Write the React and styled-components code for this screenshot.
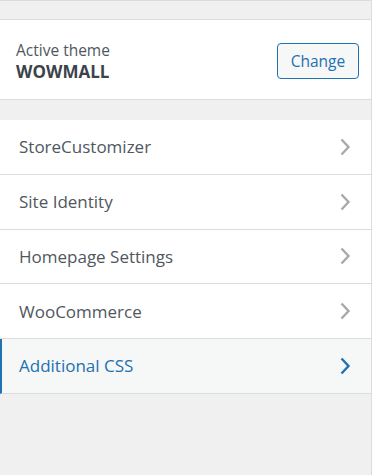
import React from "react";
import styled, { createGlobalStyle } from "styled-components";

const GlobalStyle = createGlobalStyle`
  html, body {
    margin: 0;
    padding: 0;
    background: #f0f0f1;
  }
  body {
    font-family: "Open Sans", "Noto Sans", "Liberation Sans", sans-serif;
    -webkit-font-smoothing: antialiased;
  }
`;

const Panel = styled.div`
  width: 372px;
  min-height: 475px;
  box-sizing: border-box;
  background: #f0f0f1;
  border-top: 1px solid #dcdcde;
  border-right: 1px solid #dcdcde;
  display: flex;
  flex-direction: column;
`;

const Gap = styled.div`
  height: ${(p) => p.size}px;
`;

const Info = styled.div`
  height: 81px;
  box-sizing: border-box;
  background: #fff;
  border-top: 1px solid #dcdcde;
  border-bottom: 1px solid #dcdcde;
  display: flex;
  align-items: center;
  justify-content: space-between;
  padding: 2px 12px 0 16px;
`;

const ThemeText = styled.div`
  display: flex;
  flex-direction: column;
  color: #50575e;
`;

const Label = styled.span`
  font-size: 15.5px;
  line-height: 22px;
  font-weight: 400;
`;

const ThemeName = styled.strong`
  font-size: 17px;
  line-height: 22px;
  font-weight: 700;
  color: #3c434a;
`;

const ChangeButton = styled.button`
  width: 82px;
  height: 36px;
  box-sizing: border-box;
  border: 1px solid #2271b1;
  border-radius: 4px;
  background: #f6f7f7;
  color: #2271b1;
  font-family: inherit;
  font-size: 15.5px;
  padding: 0;
  cursor: pointer;
`;

const Menu = styled.ul`
  list-style: none;
  margin: 0;
  padding: 0;
`;

const Item = styled.li`
  height: 54.75px;
  box-sizing: border-box;
  display: flex;
  align-items: center;
  justify-content: space-between;
  padding: 0 20px 0 ${(p) => (p.active ? 17 : 19)}px;
  background: ${(p) => (p.active ? "#f6f7f7" : "#fff")};
  border-bottom: 1px solid #dcdcde;
  border-left: ${(p) => (p.active ? "2px solid #2271b1" : "0")};
  color: ${(p) => (p.active ? "#2271b1" : "#50575e")};
  font-size: 17px;
  font-weight: 500;
  cursor: pointer;
`;

const Chevron = ({ color }) => (
  <svg width="12" height="18" viewBox="0 0 12 18" aria-hidden="true">
    <polyline
      points="2.5,1.5 9.5,9 2.5,16.5"
      fill="none"
      stroke={color}
      strokeWidth="2.4"
    />
  </svg>
);

const sections = [
  "StoreCustomizer",
  "Site Identity",
  "Homepage Settings",
  "WooCommerce",
  "Additional CSS",
];

export default function App() {
  const active = "Additional CSS";
  return (
    <>
      <GlobalStyle />
      <Panel>
        <Gap size={18} />
        <Info>
          <ThemeText>
            <Label>Active theme</Label>
            <ThemeName>WOWMALL</ThemeName>
          </ThemeText>
          <ChangeButton type="button">Change</ChangeButton>
        </Info>
        <Gap size={20} />
        <Menu>
          {sections.map((title) => (
            <Item key={title} active={title === active}>
              <span>{title}</span>
              <Chevron color={title === active ? "#2271b1" : "#a7aaad"} />
            </Item>
          ))}
        </Menu>
      </Panel>
    </>
  );
}
